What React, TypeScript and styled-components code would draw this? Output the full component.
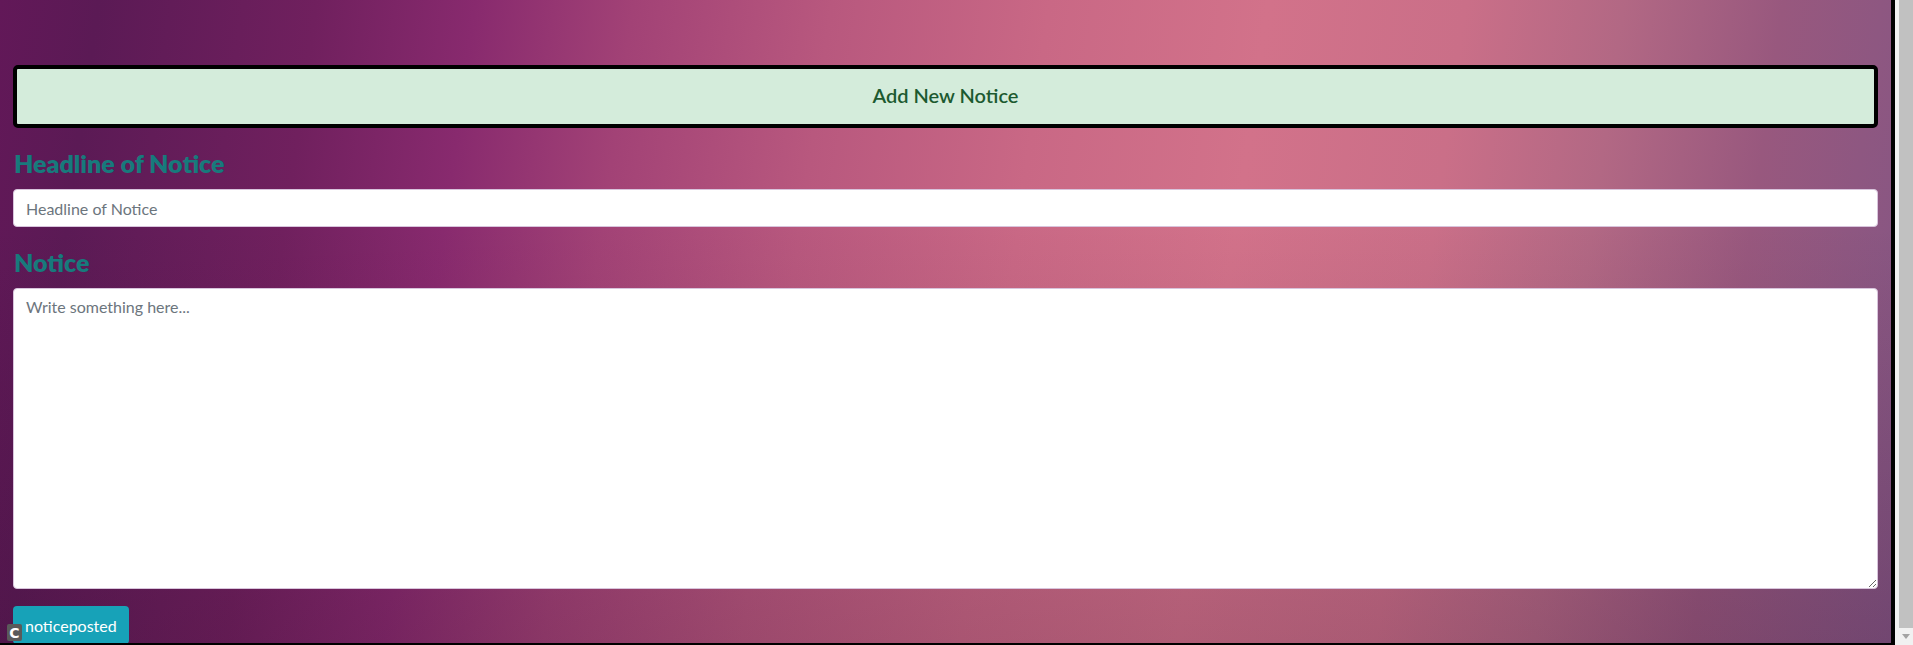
import styled, { createGlobalStyle } from 'styled-components';

const GlobalStyle = createGlobalStyle`
  html, body {
    margin: 0;
    padding: 0;
    overflow: hidden;
  }
  body {
    font-family: Lato, 'Open Sans', sans-serif;
  }
  * {
    box-sizing: border-box;
  }
`;

const Frame = styled.div`
  display: flex;
  height: 645px;
  width: 100%;
  overflow: hidden;
  background: #f1f1f1;
`;

const Main = styled.main`
  flex: 1;
  position: relative;
  height: 645px;
  overflow: hidden;
  padding: 65px 13px 0 13px;
  border-right: 4px solid #000;
  border-bottom: 2px solid #000;
  background:
    linear-gradient(to bottom, rgba(40, 8, 36, 0) 35%, rgba(40, 8, 36, 0.2) 100%),
    linear-gradient(
      98deg,
      #621858 0%,
      #5b1a55 5%,
      #70205e 16%,
      #882a6e 24%,
      #a24276 32%,
      #b8587e 42%,
      #c96885 53%,
      #d2728a 64%,
      #ca6f88 74%,
      #b26884 82%,
      #98587e 90%,
      #845684 100%
    );
`;

const Banner = styled.div`
  height: 63px;
  border: 4px solid #000;
  border-radius: 5px;
  background: #d4ecdb;
  color: #1c5a30;
  display: flex;
  align-items: center;
  justify-content: center;
  font-size: 20px;
  font-weight: 600;
  padding-bottom: 3px;
`;

const Form = styled.form`
  display: flex;
  flex-direction: column;
`;

const Label = styled.label`
  font-size: 25px;
  font-weight: 800;
  line-height: 29px;
  color: #177a7c;
  margin: 21px 0 11px 1px;
`;

const Input = styled.input`
  height: 38px;
  width: 100%;
  border: 1px solid #d8c4dc;
  border-radius: 4px;
  padding: 6px 12px;
  font-family: Lato, 'Open Sans', sans-serif;
  font-size: 16px;
  color: #495057;
  background: #fff;
  &::placeholder {
    color: #6c757d;
  }
`;

const TextArea = styled.textarea`
  height: 301px;
  width: 100%;
  border: 1px solid #d8c4dc;
  border-radius: 4px;
  padding: 6px 12px;
  font-family: Lato, 'Open Sans', sans-serif;
  font-size: 16px;
  line-height: 1.5;
  color: #495057;
  background: #fff;
  &::placeholder {
    color: #6c757d;
  }
`;

const Submit = styled.button`
  align-self: flex-start;
  margin-top: 17px;
  height: 38px;
  padding: 6px 12px;
  border: none;
  border-radius: 4px;
  background: #17a2b8;
  color: #fff;
  font-family: Lato, 'Open Sans', sans-serif;
  font-size: 16px;
  cursor: pointer;
`;

const Badge = styled.div`
  position: absolute;
  left: 7px;
  bottom: 2px;
  width: 15px;
  height: 17px;
  border-radius: 2px;
  background: #5a5a5a;
  color: #fff;
  font-family: 'DejaVu Sans', sans-serif;
  font-weight: 700;
  font-size: 14px;
  display: flex;
  align-items: center;
  justify-content: center;
`;

const Scrollbar = styled.div`
  width: 18px;
  height: 645px;
  display: flex;
  flex-direction: column;
  padding: 0 0 0 4px;
  background: #f1f1f1;
`;

const Thumb = styled.div`
  flex: 1;
  background: #c1c1c1;
`;

const Arrow = styled.div`
  height: 17px;
  display: flex;
  align-items: center;
  justify-content: center;
  svg {
    display: block;
  }
`;

export default function App() {
  return (
    <>
      <GlobalStyle />
      <Frame>
        <Main>
          <Banner>Add New Notice</Banner>
          <Form onSubmit={(e) => e.preventDefault()}>
            <Label htmlFor="headline">Headline of Notice</Label>
            <Input id="headline" type="text" placeholder="Headline of Notice" />
            <Label htmlFor="notice">Notice</Label>
            <TextArea id="notice" placeholder="Write something here..." />
            <Submit type="submit">noticeposted</Submit>
          </Form>
          <Badge>C</Badge>
        </Main>
        <Scrollbar>
          <Thumb />
          <Arrow>
            <svg width="8" height="5" viewBox="0 0 8 5">
              <path d="M0 0h8L4 5z" fill="#a3a3a3" />
            </svg>
          </Arrow>
        </Scrollbar>
      </Frame>
    </>
  );
}
